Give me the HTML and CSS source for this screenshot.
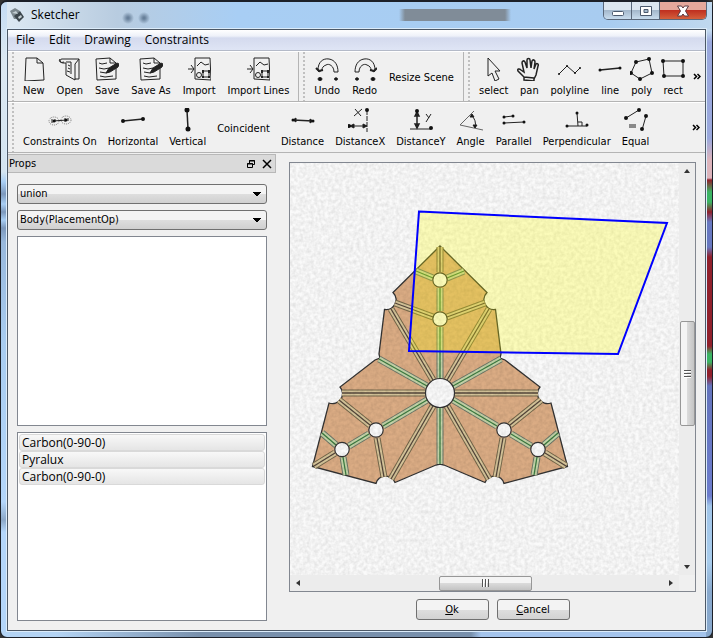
FILE: index.html
```html
<!DOCTYPE html>
<html lang="en">
<head>
<meta charset="utf-8">
<title>Sketcher</title>
<link rel="stylesheet" href="styles.css">
</head>
<body>
<svg class="defs" aria-hidden="true">
  <defs>
    <g id="i-save"><path d="M1 2 15 1 21 6V22L2 23ZM15 1V6H21M4 6l3 1 5-1M4 11l5 1 5-1M5 15l6 1 4-2M5 19l5 1 8-1"/><path d="m11 16 3-5 8-5 2 1-1 3-8 5z" fill="#222"/></g>
    <g id="i-import"><path d="M8 1 23 1 24 23 8 22ZM1 12l6 0M4 8l3 4-3 4M10 9l4-4 4 3 4-1"/><rect x="16" y="14" width="6" height="6"/><circle cx="12" cy="18" r="2.5"/><path d="M16 13v3M22 13v3M16 19v2M22 19v2" stroke-width="2"/></g>
    <g id="i-undo"><path d="M3 13C3 5 8 1 14 2s9 6 9 13l-4 0C19 9 14 6 11 8c-3 1-4 3-4 5l-3 2-2-3z"/><path d="M1 11l3 3 4-1" stroke-width="2"/><ellipse cx="5" cy="22" rx="2" ry="1.500" fill="#111"/><ellipse cx="21" cy="22" rx="1.500" ry="1.200" fill="#111"/></g>
  </defs>
</svg>
<div class="window">
  <header class="titlebar">
    <svg class="logo" viewBox="0 0 16 16"><path d="M1 4 6 1l5 3-4 4 1 4-3 0z" fill="#7c888e"/><path d="m5 9 6-5 4 6-5 5z" fill="#3c464c"/><path d="m3 6 4-2 2 3zM9 10l3-2 1 2-3 2z" fill="#c5d0d4"/></svg>
    <h1>Sketcher</h1>
    <div class="controls">
      <button aria-label="Minimize"><svg viewBox="0 0 14 12"><rect x="1.500" y="6.500" width="11" height="4" rx="1" fill="#fff" stroke="#4c5a6e"/></svg></button>
      <button aria-label="Maximize"><svg viewBox="0 0 14 12"><path d="M1.500 1.500h11v9h-11zM5 4.500v3h4v-3z" fill="#fff" fill-rule="evenodd" stroke="#4c5a6e"/></svg></button>
      <button class="close" aria-label="Close"><svg viewBox="0 0 14 12"><path d="M1.500 1h4L7 3 8.500 1h4L9.500 6l3 5h-4L7 9l-1.500 2h-4l3-5z" fill="#fff" stroke="#5a3a40"/></svg></button>
    </div>
  </header>
  <div class="client">
    <nav class="menubar"><button>File</button><button>Edit</button><button>Drawing</button><button>Constraints</button></nav>
    <div class="toolrow">
      <div class="toolbar">
        <button><svg viewBox="0 0 24 24"><path d="M4 1 15 1 21 6 22 23 3 24ZM15 1V6H21"/></svg>New</button>
        <button><svg viewBox="0 0 24 24"><path d="M4 2h17v20h-4M4 2c-3 0-2 4 1 4h3V18l9 5V7l4-5M8 5h5v12M10 8l2 1M10 11l2 1M9 14l3 1M2 2c-2 3 1 4 4 3"/></svg>Open</button>
        <button><svg viewBox="0 0 24 24"><use href="#i-save"/></svg>Save</button>
        <button><svg viewBox="0 0 24 24"><use href="#i-save"/></svg>Save As</button>
        <button><svg viewBox="0 0 24 24"><use href="#i-import"/></svg>Import</button>
        <button><svg viewBox="0 0 24 24"><use href="#i-import"/></svg>Import Lines</button>
      </div>
      <div class="toolbar">
        <button><svg viewBox="0 0 24 24"><use href="#i-undo"/></svg>Undo</button>
        <button><svg viewBox="0 0 24 24"><use href="#i-undo" transform="matrix(-1 0 0 1 25 0)"/></svg>Redo</button>
        <button>Resize Scene</button>
      </div>
      <div class="toolbar last">
        <button><svg viewBox="0 0 24 24"><path d="M6 1 18 14 13 14 17 22 13 24 10 16 6 19Z"/></svg>select</button>
        <button><svg viewBox="0 0 24 24"><path stroke-width="1.500" d="M7 23v-3L1 14c-1-2 1-3 3-1l3 2L5 6c0-2 2-3 3-1l2 6V3c0-2 3-2 3 0l1 8 1-7c1-2 3-1 3 1l-1 7 2-5c1-1 3 0 2 2l-2 9-2 4v2zM7 20l10 1"/></svg>pan</button>
        <button><svg viewBox="0 0 24 24"><path d="M1 17 9 9 17 16 22 11"/><path class="dots small" d="M1 17h0M9 9h0M17 16h0M22 11h0"/></svg>polyline</button>
        <button><svg viewBox="0 0 24 24"><path stroke-width="1.500" d="M2 13 22 11"/><path class="dots" d="M2 13h0M22 11h0"/></svg>line</button>
        <button><svg viewBox="0 0 24 24"><path d="M6 5 19 2 22 16 10 22 1 16Z"/><path class="dots big" d="M6 5h0M19 2h0M22 16h0M10 22h0M1 16h0"/></svg>poly</button>
        <button><svg viewBox="0 0 24 24"><path d="M2 4H22V19H3Z"/><path class="dots big" d="M2 4h0M22 4h0M22 19h0M3 19h0"/></svg>rect</button>
      </div>
      <button class="more" aria-label="More tools"><svg viewBox="0 0 8 7"><path d="m1 1 2.500 2.500L1 6M4.500 1 7 3.500 4.500 6"/></svg></button>
    </div>
    <div class="toolrow">
      <div class="toolbar last">
        <button><svg viewBox="0 0 24 24"><g stroke="#777" stroke-dasharray="1 1"><ellipse cx="6" cy="13" rx="5" ry="4"/><ellipse cx="18" cy="12" rx="5" ry="4"/></g><path d="M5 13 19 12M4 11v4M7 11v3M17 10v4M20 10v3"/><path class="dots" d="M6 13h0M18 12h0"/></svg>Constraints On</button>
        <button><svg viewBox="0 0 24 24"><path stroke-width="1.500" d="M2 13 22 11"/><path class="dots big" d="M2 13h0M22 11h0"/></svg>Horizontal</button>
        <button><svg viewBox="0 0 24 24"><path stroke-width="1.500" d="M11 2 12 21"/><path class="dots huge" d="M11 2h0M12 21h0"/></svg>Vertical</button>
        <button>Coincident</button>
        <button><svg viewBox="0 0 24 24"><path stroke-width="1.500" d="M2 12 22 13"/><path d="M5 10v4L2 12zM19 11v4l3-2z" fill="#111"/><path class="dots" d="M2 12h0M22 13h0"/></svg>Distance</button>
        <button><svg viewBox="0 0 24 24"><path d="m7 1 6 7M14 1 6 8"/><path stroke-dasharray="5 1" d="M19 2V24"/><path d="M2 18H18M6 16l-4 2 4 2zM15 16l4 2-4 2z" fill="#111"/><path class="dots big" d="M19 2h0M1 18h0"/></svg>DistanceX</button>
        <button><svg viewBox="0 0 24 24"><path d="m17 6 3 4M22 6l-5 8M1 21H22"/><path stroke-width="1.500" d="M8 4V19M6 8l2-4 2 4zM6 16l2 4 2-4z" fill="#111"/><path class="dots big" d="M8 3h0M22 20h0"/></svg>DistanceY</button>
        <button><svg viewBox="0 0 24 24"><path stroke="#666" d="M15 3 1 17 24 22"/><path d="M12 7q6 5 4 13"/><path d="M11 9l2-3 2 3zM14 17h4l-2 3z" fill="#111"/></svg>Angle</button>
        <button><svg viewBox="0 0 24 24"><path d="M2 9 11 8M2 15 22 14"/><path class="dots" d="M2 9h0M11 8h0M2 15h0M22 14h0"/></svg>Parallel</button>
        <button><svg viewBox="0 0 24 24"><path d="M12 5 13 18M2 18H22M13 14h4v4"/><path class="dots" d="M12 5h0M2 18h0M22 17h0"/></svg>Perpendicular</button>
        <button><svg viewBox="0 0 24 24"><path d="M2 10 15 2M22 8 18 22M5 17h7M5 19h7"/><path class="dots big" d="M2 10h0M15 2h0M22 8h0M18 21h0"/></svg>Equal</button>
      </div>
      <button class="more" aria-label="More constraints"><svg viewBox="0 0 8 7"><path d="m1 1 2.500 2.500L1 6M4.500 1 7 3.500 4.500 6"/></svg></button>
    </div>
    <div class="workspace">
      <aside class="dock">
        <div class="dock-title"><h2>Props</h2>
          <button aria-label="Float"><svg viewBox="0 0 10 10"><path d="M3.500 5V1.500h5v4H6M3 2h6M1.500 4.500h5v4h-5zM1 5h6"/></svg></button>
          <button aria-label="Close panel"><svg viewBox="0 0 10 10"><path stroke-width="1.500" d="m1 1 8 8M9 1 1 9"/></svg></button>
        </div>
        <div class="dock-body">
          <select aria-label="Operation"><option>union</option></select>
          <select aria-label="Body"><option>Body(PlacementOp)</option></select>
          <div class="list"></div>
          <ul class="list"><li>Carbon(0-90-0)</li><li>Pyralux</li><li>Carbon(0-90-0)</li></ul>
        </div>
      </aside>
      <main class="editor">
        <div class="view">
          <svg class="scene" viewBox="290 163 389 412" preserveAspectRatio="xMidYMid slice">
            <defs>
              <filter id="grain" x="0" y="0" width="100%" height="100%" color-interpolation-filters="sRGB"><feTurbulence type="fractalNoise" baseFrequency="0.28" numOctaves="2" seed="4"/><feColorMatrix values="0 0 0 0 0 0 0 0 0 0 0 0 0 0 0 0.16 0 0 0 -0.045"/></filter>
              <g id="green"><path d="M440 379V327M440 311V288M440 407V464M453 386 501 359M427 386 379 359M453 400 497 426M427 400 383 426M511 434 531 446M369 434 349 446M447 278 464 271M433 278 416 271M544 445 558 433M336 445 322 433M537 457 534 475M343 457 346 475"/></g>
              <g id="tan"><path d="M440 272V247M454 393H538M426 393H342M447 380 489 309M433 380 391 309M447 406 489 479M433 406 391 479M447 317 485 303M433 317 395 303M510 425 541 400M370 425 339 400M503 438 496 477M377 438 384 477M545 453 566 466M335 453 314 466"/></g>
            </defs>
            <rect x="0" y="0" width="1000" height="1000" fill="#fafafa"/>
            <path fill="#dbac84" stroke="#333" stroke-width="1.300" d="M440 246 487 292.500A10 10 0 0 0 495.500 309.500L501 354 500 358 505 360 540 387A10 10 0 0 0 551 403L567.500 466.500 504 483.500A10 10 0 0 0 485 482.500L444 465 440 464 436 465 395 482.500A10 10 0 0 0 376 483.500L312.500 466.500 329 403A10 10 0 0 0 340 387L375 360 380 358 379 354 384.500 309.500A10 10 0 0 0 393 292.500Z"/>
            <g fill="none">
              <use href="#tan" stroke="#75674a" stroke-width="7"/><use href="#tan" stroke="#d6c59a" stroke-width="5"/><use href="#tan" stroke="#54463a" stroke-width="1.300"/>
              <use href="#green" stroke="#6c7768" stroke-width="7"/><use href="#green" stroke="#c4d4a8" stroke-width="5"/><use href="#green" stroke="#3c7a40" stroke-width="1.300"/>
            </g>
            <g fill="#fafafa" stroke="#333" stroke-width="1.200"><circle cx="440" cy="393" r="14.500"/><circle cx="440" cy="280" r="7.200"/><circle cx="440" cy="319" r="7.200"/><circle cx="504" cy="430" r="7.200"/><circle cx="538" cy="449.500" r="7.200"/><circle cx="376" cy="430" r="7.200"/><circle cx="342" cy="449.500" r="7.200"/></g>
            <rect x="290" y="163" width="389" height="412" filter="url(#grain)"/>
            <path d="M419 211.500 667 223 618 354 409 351Z" fill="#ff0" fill-opacity=".26" stroke="#00f" stroke-width="2"/>
          </svg>
          <div class="scroll vertical"><i class="arrow up"></i><div class="track"><div class="thumb"></div></div><i class="arrow down"></i></div>
          <div class="scroll horizontal"><i class="arrow left"></i><div class="track"><div class="thumb"></div></div><i class="arrow right"></i></div>
        </div>
        <div class="actions"><button><u>O</u>k</button><button><u>C</u>ancel</button></div>
      </main>
    </div>
  </div>
</div>
</body>
</html>
```

FILE: styles.css
```css
* { box-sizing: border-box; }
body { margin: 0; background: #333; font: 11px/14px "DejaVu Sans Condensed", "DejaVu Sans", sans-serif; color: #000; }
button { font: inherit; color: inherit; padding: 0; border: 0; background: none; }
h1, h2, ul { margin: 0; padding: 0; font-weight: normal; }
.defs { position: absolute; width: 0; height: 0; }
.window {
  display: flex; flex-direction: column; min-height: 100vh; padding: 0 6px 6px;
  border: 1px solid #1c2028; border-top-width: 2px; border-radius: 7px;
  background:
    linear-gradient(#c5dcf0 28px, #9aa8dc 40px, #9aa8dc 136px, #dcb4bc 158px, #dcb4bc 176px, #90202c 178px, #3cb464 190px, #3cb464 200px, #90202c 210px, #6878c0 220px, #6878c0 245px, #90202c 255px, #90202c 344px, #3cb464 352px, #3cb464 360px, #90202c 368px, #90202c 374px, #6474bc 384px, #6c7ccc 494px, #a0c4e8 504px, #a8ccec 560px, #88a8cc 590px) right / 6px 100% no-repeat,
    linear-gradient(90deg, #b4d4f4 55px, #7890ac 200px, #7890ac 470px, #a4c4ec 480px) bottom / 100% 6px no-repeat,
    linear-gradient(#c4dcf4, #dce8f2 60px, #d4e4f0 170px, #a8cef4 180px, #7c98bc 192px, #a8cef4 202px, #7c98bc 210px, #a8cef4 218px, #7c98bc 226px, #98b8dc 240px, #a8ccf0 340px, #b4d6fa 500px, #8ca8c8 518px, #b4d6fa 530px);
}
.titlebar {
  display: flex; align-items: flex-start; height: 27px; gap: 6px; padding: 0 5px 0 2px; margin-right: -6px;
  background:
    radial-gradient(circle, #68809a 1px, transparent 6px) 112px 7px / 18px 18px no-repeat,
    radial-gradient(circle, #68809a 1px, transparent 6px) 128px 7px / 18px 18px no-repeat,
    linear-gradient(90deg, transparent, #808c98 6px, #808c98 106px, transparent) 392px 7px / 112px 12px no-repeat,
    linear-gradient(90deg, #dce8f2, #b8cce0 110px, #a8cef4 230px, #a8ccf0 600px, #c0d8ee);
}
.logo { width: 16px; height: 16px; margin-top: 5px; }
h1 { flex: 1; font: 12px/26px "Open Sans", sans-serif; }
.controls { display: flex; border: 1px solid #59677a; border-top: 0; border-radius: 0 0 5px 5px; overflow: hidden; }
.controls button { width: 28px; height: 17px; border-right: 1px solid #59677a; background: linear-gradient(#dce6f0 45%, #a4b8cc 50%, #c8dcee); }
.controls svg { width: 14px; height: 12px; display: block; margin: auto; }
.controls .close { width: 46px; border: 0; background: linear-gradient(#e4a89c 45%, #c03020 50%, #d4603c); }
.client { flex: 1; display: flex; flex-direction: column; border: 1px solid #4c5866; background: #f0f0f0; box-shadow: 0 0 0 1px #dcecfa; }
.menubar { display: flex; height: 21px; padding: 0 1px; background: linear-gradient(#fff, #eef1f9 30%, #d4daee 40%, #dfe5f5); border-bottom: 1px solid #b4bac8; font: 12px/20px "Open Sans", sans-serif; }
.menubar button { padding: 0 7px; }
.toolrow { display: flex; height: 51px; border-bottom: 1px solid #b4b4b4; border-top: 1px solid #fff; }
.toolbar { display: flex; padding: 2px 3px 0 9px; border-right: 1px solid #b4b4b4; background: radial-gradient(circle, #c0c0c0 1px, transparent 1px) 3px 3px / 4px 4px repeat-y; }
.toolbar.last { flex: 1; gap: 1px; padding: 2px 0 0 10px; border: 0; }
.toolbar button { display: flex; flex-direction: column; align-items: center; justify-content: center; gap: 3px; padding: 0 6px; white-space: nowrap; }
.toolbar.last button { padding: 0 5px; }
.toolbar svg { width: 24px; height: 24px; margin: 0 -2px; fill: none; stroke: #222; stroke-width: 1; }
.toolbar .dots { stroke: #111; stroke-width: 3; stroke-linecap: round; }
.toolbar .small { stroke-width: 2; }
.toolbar .big { stroke-width: 4; }
.toolbar .huge { stroke-width: 5; }
.more { width: 18px; }
.more svg { width: 8px; height: 7px; fill: none; stroke: #000; stroke-width: 1.5; }
.workspace { flex: 1; display: flex; gap: 13px; }
.dock { flex: 0 0 268px; display: flex; flex-direction: column; padding-top: 1px; }
.dock-title { display: flex; align-items: center; gap: 6px; height: 19px; padding: 0 3px 0 1px; border: 1px solid #b8b8b8; border-left: 0; background: #dadada; }
.dock-title h2 { flex: 1; font-size: 11px; }
.dock-title button { width: 10px; height: 10px; }
.dock-title svg { display: block; width: 10px; height: 10px; fill: none; stroke: #000; }
.dock-body { flex: 1; display: flex; flex-direction: column; gap: 6px; padding: 11px 9px 9px; }
select { appearance: none; height: 20px; padding: 0 2px; border: 1px solid #707070; border-radius: 3px; font: inherit; color: #000; background: conic-gradient(from -45deg at 50% 100%, #000 90deg, transparent 0) right 5px center / 8px 4px no-repeat, linear-gradient(#f4f4f4 50%, #dedede 50%, #d0d0d0); }
.list { flex: 1; border: 1px solid #828790; background: #fff; list-style: none; padding: 1px; font: 12px/15px "Open Sans", sans-serif; }
.list li { height: 17px; padding: 0 2px; border: 1px solid #d9d9d9; border-radius: 3px; background: linear-gradient(#f8f8f8, #e5e5e5); }
.editor { flex: 1; display: flex; flex-direction: column; gap: 7px; padding: 9px 9px 10px 0; }
.view { flex: 1; display: grid; grid-template: minmax(0, 1fr) 16px / minmax(0, 1fr) 16px; border: 1px solid #828790; }
.scene { width: 100%; height: 100%; min-height: 0; display: block; }
.scroll { display: flex; align-items: center; background: #ececec; }
.vertical { flex-direction: column; }
.track { flex: 1; display: flex; }
.vertical .track { flex-direction: column; width: 15px; }
.horizontal .track { height: 15px; }
.track::before { content: ""; flex: 142; }
.track::after { content: ""; flex: 133; }
.thumb { flex: 103; border: 1px solid #979797; border-radius: 2px; display: grid; place-items: center; background: linear-gradient(90deg, #f4f4f4 45%, #dadada 50%, #c4c4c4); }
.horizontal .track::before { flex: 133; }
.horizontal .track::after { flex: 131; }
.horizontal .thumb { flex: 92; background: linear-gradient(#f4f4f4 45%, #dadada 50%, #c4c4c4); }
.thumb::after { content: ""; width: 7px; height: 8px; background: repeating-linear-gradient(#555 0 1px, #fff 1px 2px, transparent 2px 3px); }
.horizontal .thumb::after { background: repeating-linear-gradient(90deg, #555 0 1px, #fff 1px 2px, transparent 2px 3px); }
.arrow { width: 16px; height: 16px; display: grid; place-items: center; }
.arrow::before { content: ""; border: 3px solid transparent; border-bottom: 4px solid #333; border-top: 0; }
.down { transform: rotate(180deg); }
.left { transform: rotate(-90deg); }
.right { transform: rotate(90deg); }
.actions { display: flex; justify-content: center; gap: 8px; }
.actions button { width: 73px; height: 21px; border: 1px solid #707070; border-radius: 3px; background: linear-gradient(#f3f3f3 50%, #dedede 50%, #d2d2d2); }
```
